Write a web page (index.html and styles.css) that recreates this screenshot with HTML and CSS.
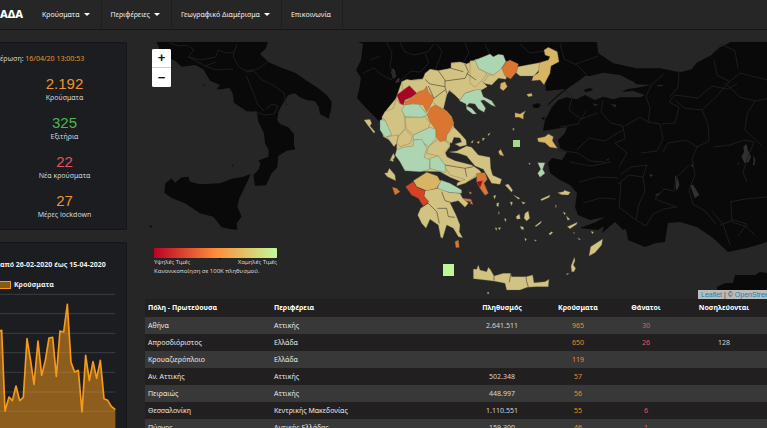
FILE: index.html
```html
<!DOCTYPE html>
<html lang="el">
<head>
<meta charset="utf-8">
<title>Κρούσματα ανά περιφέρεια</title>
<link rel="stylesheet" href="styles.css">
</head>
<body>
<nav class="navbar">
  <a class="brand" href="#">ΑΔΑ</a>
  <a class="nav-item" href="#">Κρούσματα<span class="caret"></span></a>
  <a class="nav-item" href="#">Περιφέρειες<span class="caret"></span></a>
  <a class="nav-item" href="#">Γεωγραφικό Διαμέρισμα<span class="caret"></span></a>
  <a class="nav-item" href="#">Επικοινωνία</a>
</nav>
<div class="page">
  <aside class="sidebar">
    <section class="card stats">
      <p class="updated">έρωση: <span class="orange">16/04/20 13:00:53</span></p>
      <div class="stat"><strong class="orange">2.192</strong><span>Κρούσματα</span></div>
      <div class="stat"><strong class="green">325</strong><span>Εξιτήρια</span></div>
      <div class="stat"><strong class="red">22</strong><span>Νέα κρούσματα</span></div>
      <div class="stat"><strong class="orange">27</strong><span>Μέρες lockdown</span></div>
    </section>
    <section class="card chart">
      <h2>από 26-02-2020 έως 15-04-2020</h2>
      <div class="key"><span class="swatch"></span>Κρούσματα</div>
      <svg class="plot" viewBox="0 174 381 405" aria-hidden="true">
        <path class="grid" d="M0 178H346M0 236H346M0 295H346M0 353H346M0 412H346M0 471H346M0 529H346"/>
        <path class="area" d="M-5 290L5 286L15 528L27 486L37 497L48 453L59 497L70 487L81 311L92 378L102 448L114 318L125 421L136 376L147 309L158 307L169 424L180 288L191 291L202 208L213 382L224 411L235 406L246 531L257 361L268 437L279 380L290 430L301 376L312 491L323 496L334 514L346 524V600H-5Z"/>
        <path class="line" d="M-5 290L5 286L15 528L27 486L37 497L48 453L59 497L70 487L81 311L92 378L102 448L114 318L125 421L136 376L147 309L158 307L169 424L180 288L191 291L202 208L213 382L224 411L235 406L246 531L257 361L268 437L279 380L290 430L301 376L312 491L323 496L334 514L346 524"/>
      </svg>
    </section>
  </aside>
  <main class="content">
    <div class="map">
      <svg class="map-art" viewBox="145 42 622 257" preserveAspectRatio="xMinYMin slice" aria-label="Χάρτης">
        <!-- Neighbouring land -->
        <g class="land">
          <path d="M358 42L363 44 361 60 356 70 361 78 359 90 357 98 366 108 380 122 390 118 405 90 480 62 545 78 546 91 565 89 558 95 549 103 547 109 552 107 545 120 543 131 567 127 565 133 558 140 560 148 567 152 562 160 552 158 548 163 550 173 560 180 570 185 577 193 575 207 578 215 590 220 605 217 596 222 580 228 598 230 604 226 602 233 615 222 623 230 626 229 628 240 645 247 656 243 665 242 668 223 680 222 697 227 713 238 728 252 747 248 767 242V42Z"/>
          <path d="M717 287L725 283 733 283 735 275 755 275 760 272 767 273V299H717Z"/>
        </g>
        <g class="land" transform="translate(140 40) scale(.33333)">
          <path d="M50 6H383L378 25 360 42 385 66 420 82 465 98 500 122 535 145 560 165 575 185 574 205 566 236 540 222 536 200 525 184 500 180 480 172 465 160 445 165 432 185 415 215 412 240 420 252 445 262 462 282 462 315 466 328 440 332 415 348 412 382 395 400 378 436 345 437 340 405 355 390 362 370 355 362 385 350 386 330 375 310 372 280 355 245 350 215 320 214 282 188 278 160 268 143 245 148 230 148 240 135 210 122 190 88 165 75 125 80 105 62 80 50 60 30Z"/>
          <path d="M332 402L320 430 298 475 292 500 305 530 290 550 292 569 270 567 245 562 220 530 180 520 135 490 95 474 73 458 76 430 95 415 105 428 125 412 145 410 150 425 180 433 240 430 280 415 305 412ZM28 555l8 3 1 5-6-2ZM190 133l6 1-2 5ZM275 373l5 3-2 4ZM235 654l10-2-3 7Z"/>
        </g>
        <g class="sea" transform="translate(470 40) scale(.33333)">
          <path d="M380 0L385 40 430 70 500 85 570 85 630 97 665 88 680 68 725 45 750 22 795 0Z"/>
          <path d="M330 120L345 107 360 108 400 98 450 105 490 125 500 133 542 135 510 142 470 148 455 156 490 153 525 165 510 172 450 172 430 178 400 170 375 180 345 165 320 178 290 172 265 180 240 207 225 235 228 205 245 185 275 160 300 140Z"/>
          <path d="M368 190l18 4-12 5ZM420 192l20 2-5 9-8-7ZM560 135l18-1v5h-15ZM375 365l10-1-2 4ZM408 360l10-6-3 8Z"/>
        </g>
        <g class="lake" transform="translate(470 40) scale(.33333)">
          <path d="M829 312l6 22 8 16-7 16-12 4-10-20 8-14-2-16ZM850 345l6 14-3 18-5-4 3-8ZM615 405l10 15 3 15-8 18-5-20ZM660 435h10l18 30-14 10ZM555 465l20-10-13 12ZM538 402l12 3-8 6ZM662 378l8-8-1 11ZM802 364l6 8-2 3Z"/>
        </g>
        <path class="land" d="M532 105l6-2 3 2-3 3h-4ZM541 118l4-1-1 3ZM584 90l5-2 4 1-2 2-6 1Z"/>
        <path class="lake" d="M391 72l2-4 2 3 1 6-3 2ZM397 79l3-1-1 4-4 1Z"/>
        <!-- Administrative borders -->
        <g class="borders">
          <path d="M170 43l9 3 8-1 7 5-6 7 13 3 15-3 2-7 8 3 8-1M237 44l-4 12 6 11 7 4 12-2 11-8M189 57l14 8 13 5 17-1M205 66l11-4M246 72l8-1 8 9 11 5 11 8 2 12 3-1M246 75l7 17 5 13 6 6M254 111l10 4 10-1 4-8-6-2-6 5"/>
          <path d="M387 43l5 10-2 14 4 8-3 5M400 43l5 9 9 3 14-3 6-8M437 44l5 8-4 11-4 10M398 83l13-12 9 1 9-9-4-9M465 43l4 10-6 10M363 73l11-5 8 7 10 5M485 44l5 11M520 44l10 9 15-2M370 60l10-4M560 43l4 16 13 6 10 10M576 64l22-8M564 90l8 7-3 13 12 9 17-6M560 127l18-3 8-13M577 150l12-12 16 3 19-12M570 162l21 4 20-4M579 182l19-5 20 1M583 203l18-5 15 1M558 150l20 3 12 8 16 1"/>
          <path d="M603 100l-2 12 10 11 12 3 2 13-10 4 12 10-8 14M625 126l15-9 8 5 12 2 3 15-6 12-16 2M648 122l2-14-4-12 6-12 12-10M662 124l13-1 4-16-10-5 6-7 23 3 14-12 15 3 10-5M679 70l-1 17-8 10M675 100l9 8 18 2 6 14 1 17-12 6-11-7-18 3-5 9M702 110l15-14 10-12 13-11 27 7M714 60l3 15 13 7M712 54l9-10 14 7 3 17M725 83l15 14 15 4-8 13-2 16 16 15M755 101l12-2M697 147l-5 12 3 16-6 15 4 14 12 7 11 13M713 147l17-2 14-5 10 2-7 17-4 14 4 9M689 165l-12 12-3 14-10-2-9 10 13 5 9 3M618 184l11-9 14 2 4-12-16 2-11 8M643 177l2 14-6 13-3 16 10 6 7-12 11-5 12-2M636 220l-17-13 2-25M730 202l15-3 22-2M731 202l1 20 13 4 10 9M720 225l13-5 14 4-9 12M712 211l11 13 7 21"/>
        </g>
        <!-- Northern and central Greece -->
        <g class="tan" transform="translate(350 40) scale(.33333)">
          <path d="M155 125L185 120 218 116 240 88 265 92 303 85 303 68 330 66 350 72 378 58 400 60 455 90 430 112 400 130 378 145 345 160 330 180 315 165 298 152 290 165 280 205 305 230 312 262 300 290 300 320 285 340 300 365 340 378 385 396 380 410 345 430 300 412 270 395 165 392 140 345 140 312 100 290 90 250 105 215 138 175Z"/>
          <path d="M155 125L170 118 185 121 218 118 225 100 240 88 265 92 303 85 303 70 330 66 350 72 378 60 385 110 412 140 395 150 370 152 345 160 330 180 315 165 298 150 290 165 280 208 265 200 235 175 200 160 180 138 158 150Z"/>
          <path d="M138 178L150 192 165 195 158 212 165 235 165 265 145 290 120 290 112 260 105 240 95 232 105 215 130 205Z"/>
          <path d="M110 290L145 285 140 310 132 320ZM145 290L165 268 187 290 180 310 150 320 140 308Z"/>
          <path d="M165 232L225 230 240 248 235 265 190 285 168 265Z"/>
          <path d="M290 285L312 262 330 280 348 300 350 315 330 320 315 312 335 306 330 294 312 292 305 310 288 303Z"/>
          <path d="M230 340L235 320 265 298 290 305 300 318 285 335 290 350 315 362 365 375 388 390 395 400 380 405 345 430 320 438 322 428 345 418 300 405 285 380 265 348Z"/>
          <path d="M298 336L320 333 350 318 365 322 385 345 420 352 422 385 428 406 455 418 450 433 425 430 400 388 375 378 350 348 325 340Z"/>
          <path d="M360 62L378 62 385 85 412 100 395 122 375 142 360 130Z"/>
          <path d="M400 130L415 105 430 105 455 82 470 108 468 118 445 115 425 135Z"/>
          <path d="M503 80L568 68 572 85 552 108 510 108 498 98Z"/>
          <path d="M42 240L60 238 65 250 60 258 75 275 72 280 52 254ZM130 340l5 10-6 10-10 2Z"/>
          <path class="border" d="M225 118L240 132 285 140M265 92L285 120 285 140 290 160M285 123L345 115 355 95 345 72M235 138L252 175 285 150M303 85L340 95M350 100L378 120M285 375L345 385 370 380M345 385L350 410"/>
        </g>
        <g class="gold" transform="translate(470 40) scale(.33333)">
          <path d="M222 30L235 22 262 35 267 65 243 78 240 100 222 134 210 120 185 122 190 108 205 98 208 68 235 60 240 50 225 45Z"/>
          <path d="M92 130L105 125 112 140 100 152 90 145ZM170 163L185 160 187 168 175 170ZM135 218L150 222 167 212 160 225 160 238 148 232 135 232ZM202 295L225 290 235 282 250 290 247 302 262 325 240 322 225 308 205 305ZM85 335L92 328 102 348 90 345ZM127 266l6-1-2 7Z"/>
        </g>
        <g class="mint" transform="translate(350 40) scale(.33333)">
          <path d="M375 60L400 50 420 42 430 50 445 43 460 45 468 65 455 85 430 105 410 98 385 85Z"/>
          <path d="M328 182L345 160 375 150 392 148 400 170 425 182 437 200 425 196 402 180 392 182 407 205 402 217 385 207 375 192 358 190 350 198 365 205 380 222 368 222 350 208 348 192Z"/>
          <path d="M155 210L165 193 205 192 220 210 232 225 215 232 165 230ZM90 240L105 240 115 262 125 285 105 292 90 270Z"/>
          <path d="M190 285L240 262 258 268 258 295 235 320 210 300 190 300Z"/>
          <path d="M140 330L160 322 190 318 190 300 215 298 230 325 222 352 240 360 238 388 225 392 210 395 165 392 150 365 135 345Z"/>
          <path d="M240 355L265 348 285 375 288 397 262 392 240 385ZM272 420L300 430 335 450 335 460 300 458 275 452 262 445Z"/>
          <path d="M563 368L585 368 578 388 585 400 570 412 563 400 572 388Z"/>
        </g>
        <g class="orange-area" transform="translate(350 40) scale(.33333)">
          <path d="M165 185L190 172 205 155 222 150 230 138 235 155 252 175 240 200 230 217 220 195 190 190 165 195Z"/>
          <path d="M255 195L290 212 305 230 312 250 300 270 290 285 288 300 270 305 258 290 258 270 240 245 232 225 240 205Z"/>
          <path d="M468 65L480 60 505 72 500 95 482 117 465 108 455 85Z"/>
          <path d="M380 400L405 398 412 418 402 430 415 460 405 466 390 445 380 425Z"/>
          <path d="M127 442L140 445 150 455 135 465ZM315 605L325 600 328 622 318 623ZM338 475l25 3 2 8-18-3ZM356 455l10 3-5 5ZM360 490l4-10 5 14Z"/>
          <path class="crimson" d="M140 165L178 137 200 160 185 172 165 180 160 195 150 190Z"/>
          <path class="crimson" d="M380 425L398 422 390 443Z"/>
        </g>
        <!-- Peloponnese -->
        <g class="tan" transform="translate(350 160) scale(.33333)">
          <path d="M225 92L262 85 300 98 330 100 338 115 355 130 345 142 325 122 300 128 318 165 330 195 328 215 338 233 325 230 310 205 290 195 278 235 272 232 265 195 240 178 228 205 215 190 203 165 212 145 235 130 222 108Z"/>
          <path class="border" d="M235 130L260 155 268 190M262 145L290 145 295 170 315 172M275 95L285 122 302 127"/>
          <path d="M103 40L112 38 118 25 135 45 137 62 112 50ZM120 0h12l-4 5Z"/>
          <path class="gold-area" d="M190 62L230 37 262 48 272 65 260 85 230 92 200 80Z"/>
          <path class="red-area" d="M167 80L190 65 200 82 225 92 222 108 237 125 220 138 205 115 185 105Z"/>
        </g>
        <!-- Aegean islands and Crete -->
        <g class="tan" transform="translate(470 160) scale(.33333)">
          <path d="M10 327L20 328 25 315 30 330 50 335 55 322 62 330 72 348 100 340 122 340 125 350 168 350 188 345 192 368 225 365 237 358 235 380 200 380 172 382 150 390 110 390 105 370 75 364 45 360 10 356Z"/>
          <path class="border" d="M72 348v14M122 342l-4 25M168 350l2 15 5 16"/>
          <path d="M357 288L362 260 398 237 395 255 375 278ZM305 335L303 318 313 292 315 302 310 315 317 325 312 335ZM105 75L115 72 128 90 125 97ZM130 105L150 115 145 118ZM155 125l12 3-8 5ZM70 108l8-3-4 13ZM80 130l7-2-2 12-5-2ZM120 125l8 2-4 10ZM165 160L175 153 179 175 170 183 162 175ZM138 170l10-8 3 14-10 2ZM103 175l6 3-3 8ZM75 203l6 1-2 8ZM84 204l8-2-3 8ZM151 198l10 4-1 8-7-4ZM195 198L215 182 212 190 198 200ZM164 234l6 4-4 6ZM193 239l7 2-5 3ZM236 222l8-7 5 2-8 8ZM212 118L240 105 238 112 215 122ZM263 98L280 95 283 91 301 97 295 105 275 104ZM279 155l8 5-3 5ZM289 168l11 10-7 3ZM292 200L322 187 320 193 300 206ZM363 214l8 2-4 6ZM323 234l9 4-5 1ZM310 217l4 1-2 3ZM288 342l9-2-4 4ZM52 397h5v4h-5ZM85 155l3 1-1 8ZM256 135l3 1-1 8ZM176 9l5 1-2 5Z"/>
          <path d="M2 307l8-6-2 8ZM20 307l8-4-1 8ZM37 294l8 1-7 8ZM53 283l8-5-5 9Z" transform="translate(0 -360)"/>
        </g>
        <path class="square-a" d="M513 140h7v7h-7Z"/>
        <path class="square-b" d="M443 264h11v12h-11Z"/>
      </svg>
      <div class="zoom">
        <button type="button" aria-label="Μεγέθυνση">+</button>
        <button type="button" aria-label="Σμίκρυνση">−</button>
      </div>
      <div class="legend">
        <div class="ramp"></div>
        <div class="ends"><span>Υψηλές Τιμές</span><span>Χαμηλές Τιμές</span></div>
        <div>Κανονικοποίηση σε 100K πληθυσμού.</div>
      </div>
      <div class="credit"><a href="#">Leaflet</a> | © <a href="#">OpenStreetMap</a></div>
    </div>
    <table class="cases">
      <colgroup><col class="c-city"><col class="c-region"><col class="c-pop"><col class="c-cases"><col class="c-deaths"><col class="c-hosp"></colgroup>
      <thead>
        <tr><th>Πόλη - Πρωτεύουσα</th><th>Περιφέρεια</th><th>Πληθυσμός</th><th>Κρούσματα</th><th>Θάνατοι</th><th>Νοσηλεύονται</th></tr>
      </thead>
      <tbody>
        <tr><td>Αθήνα</td><td>Αττικής</td><td>2.641.511</td><td>965</td><td>30</td><td></td></tr>
        <tr><td>Απροσδιόριστος</td><td>Ελλάδα</td><td></td><td>650</td><td>26</td><td>128</td></tr>
        <tr><td>Κρουαζιερόπλοιο</td><td>Ελλάδα</td><td></td><td>119</td><td></td><td></td></tr>
        <tr><td>Αν. Αττικής</td><td>Αττικής</td><td>502.348</td><td>57</td><td></td><td></td></tr>
        <tr><td>Πειραιώς</td><td>Αττικής</td><td>448.997</td><td>56</td><td></td><td></td></tr>
        <tr><td>Θεσσαλονίκη</td><td>Κεντρικής Μακεδονίας</td><td>1.110.551</td><td>55</td><td>6</td><td></td></tr>
        <tr><td>Πύργος</td><td>Δυτικής Ελλάδας</td><td>159.300</td><td>46</td><td>1</td><td></td></tr>
      </tbody>
    </table>
  </main>
</div>
</body>
</html>
```
FILE: styles.css
```css
* { box-sizing: border-box; }

body {
  margin: 0;
  height: 100vh;
  overflow: hidden;
  background: #262626;
  color: #d4d4d4;
  font: 7px/12px "Noto Sans", "Open Sans", sans-serif;
}

a { color: inherit; text-decoration: none; }

.navbar {
  display: flex;
  height: 30px;
  border-bottom: 1px solid #171717;
}
.brand {
  width: 33px;
  color: #fff;
  font-size: 11px;
  font-weight: 800;
  line-height: 28px;
}
.nav-item {
  display: flex;
  align-items: center;
  gap: 4px;
  padding: 0 11px 0 9px;
  border-right: 1px solid #1e1e1e;
  color: #f0f0f0;
  line-height: 28px;
}
.caret {
  border: 3px solid transparent;
  border-top-color: #fff;
  border-bottom: 0;
}

.page { display: flex; gap: 18px; padding-top: 12px; }
.sidebar { width: 127px; flex: none; display: flex; flex-direction: column; gap: 12px; }
.card {
  background: #1c1d21;
  border: 1px solid #15161a;
  border-left: 0;
  border-radius: 0 2px 2px 0;
}
.stats { height: 188px; padding-top: 10px; }
.updated { margin: 0 0 10px; white-space: nowrap; }
.stat {
  display: flex;
  flex-direction: column;
  align-items: center;
  padding: 0 0 10px 3px;
}
.stat strong { font: 15px/17px "Liberation Sans", sans-serif; }
.orange { color: #f0942a; }
.green { color: #4bb84e; }
.red { color: #e4525f; }

.chart { padding-top: 16px; }
.chart h2 { margin: 0; font-size: 7px; line-height: 12px; color: #eee; white-space: nowrap; }
.key { display: flex; align-items: center; gap: 3px; margin-top: 8px; font-weight: 700; color: #eee; }
.swatch { width: 11px; height: 8px; background: #8a5a14; border: 1px solid #f59a1c; border-left: 0; }
.plot { display: block; width: 127px; height: 135px; margin-top: 2px; }
.grid { stroke: #3c3d40; stroke-width: 3; fill: none; }
.area { fill: #f59a1c; fill-opacity: .52; }
.line { fill: none; stroke: #f59a1c; stroke-width: 5; stroke-linejoin: round; }

.content { flex: 1; min-width: 0; }
.map { position: relative; height: 257px; overflow: hidden; }
.map-art { display: block; width: 100%; height: 100%; }
.land { fill: #090909; }
.sea { fill: #262626; }
.lake { fill: #303030; }
.borders { fill: none; stroke: #1d1d1d; stroke-width: 1; stroke-linejoin: round; }
.tan, .gold, .mint, .orange-area { stroke: #6a6450; stroke-width: 1; stroke-linejoin: round; }
.tan { fill: #d3c382; }
.gold, .gold-area { fill: #d9b563; }
.mint { fill: #aed5b2; }
.orange-area { fill: #db7632; }
.red-area { fill: #d64223; }
.crimson { fill: #a80326; }
.border { fill: none; stroke: #4c4838; stroke-width: 2; }
.square-a { fill: #a6d98c; }
.square-b { fill: #bdf896; }

.zoom {
  position: absolute;
  top: 7px;
  left: 7px;
  display: flex;
  flex-direction: column;
  width: 19px;
  border-radius: 2px;
  overflow: hidden;
  background: #fff;
}
.zoom button {
  height: 19px;
  padding: 0;
  border: 0;
  background: #fff;
  color: #111;
  font: bold 13px/18px "Liberation Sans", sans-serif;
}
.zoom button:first-child { border-bottom: 1px solid #ccc; }

.legend {
  position: absolute;
  top: 206px;
  left: 9px;
  width: 123px;
  font-size: 6px;
  line-height: 9px;
  white-space: nowrap;
}
.ramp {
  height: 10px;
  border-radius: 1px;
  background: linear-gradient(90deg, #bd0026, #fd8d3c 50%, #c2fa98);
}
.ends { display: flex; justify-content: space-between; }

.credit {
  position: absolute;
  right: 0;
  bottom: 0;
  width: 69px;
  padding-left: 3px;
  overflow: hidden;
  background: #bcbcbc;
  color: #333;
  font: 7px/9px "Liberation Sans", sans-serif;
  white-space: nowrap;
}
.credit a { color: #1683ac; }

.cases { width: 100%; table-layout: fixed; border-collapse: collapse; }
.c-city { width: 126px; }
.c-region { width: 188px; }
.c-pop { width: 86px; }
.c-cases { width: 66px; }
.c-deaths { width: 70px; }
.c-hosp { width: 86px; }
.cases th, .cases td { height: 17px; padding: 0 3px; text-align: center; white-space: nowrap; }
.cases th { height: 18px; color: #fff; font-weight: 700; }
.cases th:nth-child(-n+2), .cases td:nth-child(-n+2) { text-align: left; }
.cases td:nth-child(-n+2) { color: #e8e8e8; }
.cases thead tr, .cases tbody tr:nth-child(even) { background: #211f20; }
.cases tbody tr:nth-child(odd) { background: #383838; }
.cases td:nth-child(4) { color: #f08c2a; }
.cases td:nth-child(5) { color: #ee5260; }
```
